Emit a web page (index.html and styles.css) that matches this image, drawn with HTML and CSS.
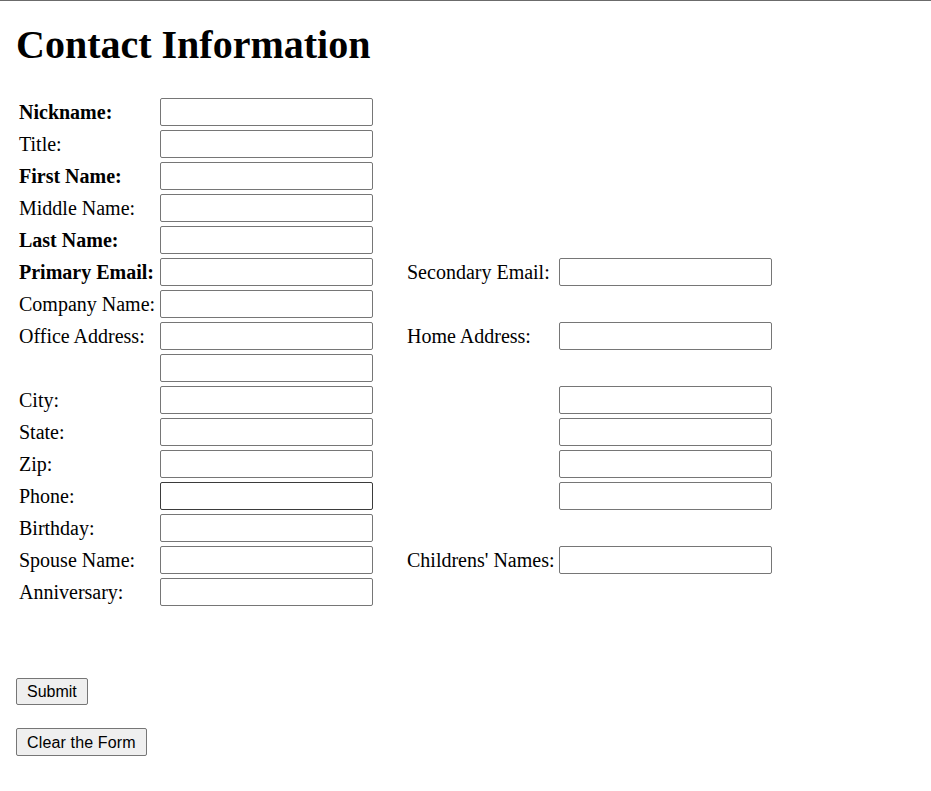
FILE: index.html
```html
<!DOCTYPE html>
<html>
<head>
<meta charset="utf-8">
<title>Contact Information</title>
<link rel="stylesheet" href="styles.css">
</head>
<body>
<h1 class="title">Contact Information</h1>
<form class="contact">
  <div class="grid">
    <label class="l1 req">Nickname:</label><input class="i1" type="text">
    <label class="l1">Title:</label><input class="i1" type="text">
    <label class="l1 req">First Name:</label><input class="i1" type="text">
    <label class="l1">Middle Name:</label><input class="i1" type="text">
    <label class="l1 req">Last Name:</label><input class="i1" type="text">
    <label class="l1 req">Primary Email:</label><input class="i1" type="text">
    <label class="l2">Secondary Email:</label><input class="i2" type="text">
    <label class="l1">Company Name:</label><input class="i1" type="text">
    <label class="l1">Office Address:</label><input class="i1" type="text">
    <label class="l2">Home Address:</label><input class="i2" type="text">
    <input class="i1" type="text">
    <label class="l1">City:</label><input class="i1" type="text"><input class="i2" type="text">
    <label class="l1">State:</label><input class="i1" type="text"><input class="i2" type="text">
    <label class="l1">Zip:</label><input class="i1" type="text"><input class="i2" type="text">
    <label class="l1">Phone:</label><input class="i1 hover" type="text"><input class="i2" type="text">
    <label class="l1">Birthday:</label><input class="i1" type="text">
    <label class="l1">Spouse Name:</label><input class="i1" type="text">
    <label class="l2">Childrens' Names:</label><input class="i2" type="text">
    <label class="l1">Anniversary:</label><input class="i1" type="text">
  </div>
  <div class="actions">
    <button type="submit" class="btn">Submit</button>
    <button type="reset" class="btn">Clear the Form</button>
  </div>
</form>
</body>
</html>
```
FILE: styles.css
```css
html {
  border-top: 1px solid #6b6b6b;
  background: #fff;
}
body {
  margin: 0;
  padding: 0 16px;
  font-family: "Liberation Serif", "Times New Roman", serif;
  font-size: 20px;
  color: #000;
}
.title {
  font-size: 40px;
  line-height: 46px;
  font-weight: bold;
  margin: 21px 0 0 0;
}
.grid {
  margin: 30px 0 0 3px;
  display: grid;
  grid-template-columns: 141px 213px 186px 213px;
  grid-auto-rows: 28px;
  row-gap: 4px;
  align-items: center;
}
.l1 { grid-column: 1; white-space: nowrap; line-height: 23px; }
.i1 { grid-column: 2; }
.l2 { grid-column: 3; padding-left: 34px; white-space: nowrap; line-height: 23px; }
.i2 { grid-column: 4; }
.req { font-weight: bold; }
input {
  box-sizing: border-box;
  width: 213px;
  height: 28px;
  margin: 0;
  border: 1px solid #767676;
  border-radius: 2px;
  background: #fff;
  font-family: "Liberation Sans", Arial, sans-serif;
  font-size: 16px;
}
input.hover { border-color: #3b3b3b; }
.actions {
  margin-top: 72px;
  display: flex;
  flex-direction: column;
  align-items: flex-start;
  gap: 23px;
}
.btn {
  box-sizing: border-box;
  height: 27px;
  padding: 0 10px;
  margin: 0;
  background: #efefef;
  border: 1px solid #767676;
  border-radius: 2px;
  font-family: "Liberation Sans", Arial, sans-serif;
  font-size: 16px;
  line-height: 19px;
  color: #000;
}
.btn + .btn { height: 28px; letter-spacing: 0.15px; }
```
